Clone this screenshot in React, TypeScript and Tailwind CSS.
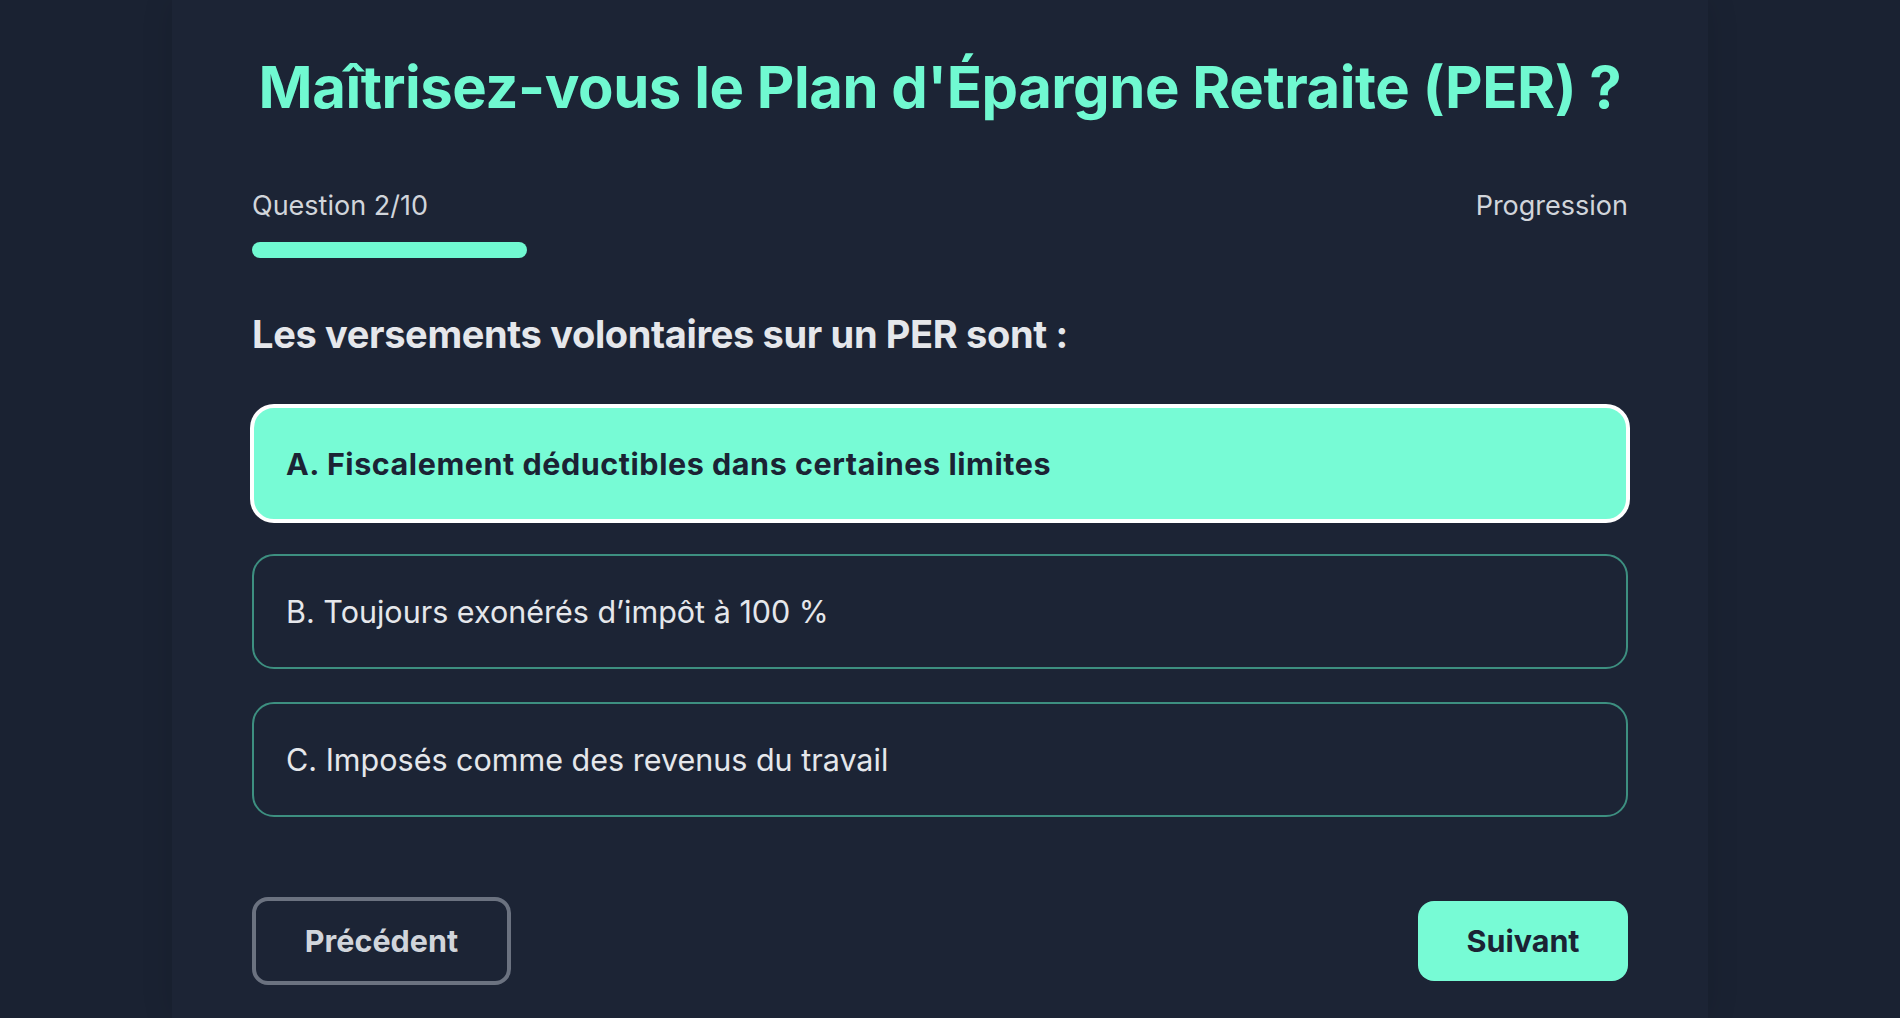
import React, { useState } from 'react';

const options = [
  { key: 'A', label: 'Fiscalement déductibles dans certaines limites' },
  { key: 'B', label: 'Toujours exonérés d’impôt à 100 %' },
  { key: 'C', label: 'Imposés comme des revenus du travail' },
];

const App: React.FC = () => {
  const [selected, setSelected] = useState('A');
  const current = 2;
  const total = 10;

  return (
    <div className="min-h-screen h-screen overflow-hidden bg-[#1a2232] flex justify-center pr-5 font-['Inter','Liberation_Sans',sans-serif]">
      <div className="w-[1536px] bg-[#1c2435] shadow-[0_0_30px_rgba(0,0,0,0.12)] px-20 pt-[58px]">
        <h1 className="text-center text-[58px] leading-none font-bold tracking-[-0.45px] text-[#70f9d1]">
          Maîtrisez-vous le Plan d'Épargne Retraite (PER) ?
        </h1>

        <div className="mt-[72px] flex justify-between text-[27px] leading-9 text-[#d1d5db]">
          <span>Question {current}/{total}</span>
          <span>Progression</span>
        </div>
        <div className="mt-[18px] h-4 w-full">
          <div className="h-4 rounded-full bg-[#70f9d1]" style={{ width: `${(current / total) * 100}%` }} />
        </div>

        <h2 className="mt-[54px] text-[38px] leading-[44px] font-bold tracking-[-0.35px] text-[#e5e7eb]">
          Les versements volontaires sur un PER sont :
        </h2>

        <div className="mt-[50px] flex flex-col gap-[33px]">
          {options.map((o) => {
            const active = selected === o.key;
            return (
              <button
                key={o.key}
                onClick={() => setSelected(o.key)}
                className={
                  active
                    ? 'h-[115px] w-full rounded-[22px] border-2 border-white bg-[#77fbd5] pl-8 text-left text-[30.5px] font-bold tracking-[0.55px] text-[#1b2334] shadow-[0_0_0_2px_#ffffff]'
                    : 'h-[115px] w-full rounded-[22px] border-2 border-[#3d8f80] bg-transparent pl-8 text-left text-[30.5px] text-[#e5e7eb]'
                }
              >
                {o.key}. {o.label}
              </button>
            );
          })}
        </div>

        <div className="mt-[80px] flex items-center justify-between">
          <button className="h-[88px] w-[259px] rounded-2xl border-4 border-[#6b7280] text-[30.5px] font-bold text-[#d1d5db]">
            Précédent
          </button>
          <button className="h-[80px] w-[210px] rounded-2xl bg-[#77fbd5] text-[30.5px] font-bold text-[#1b2334]">
            Suivant
          </button>
        </div>
      </div>
    </div>
  );
};

export default App;
